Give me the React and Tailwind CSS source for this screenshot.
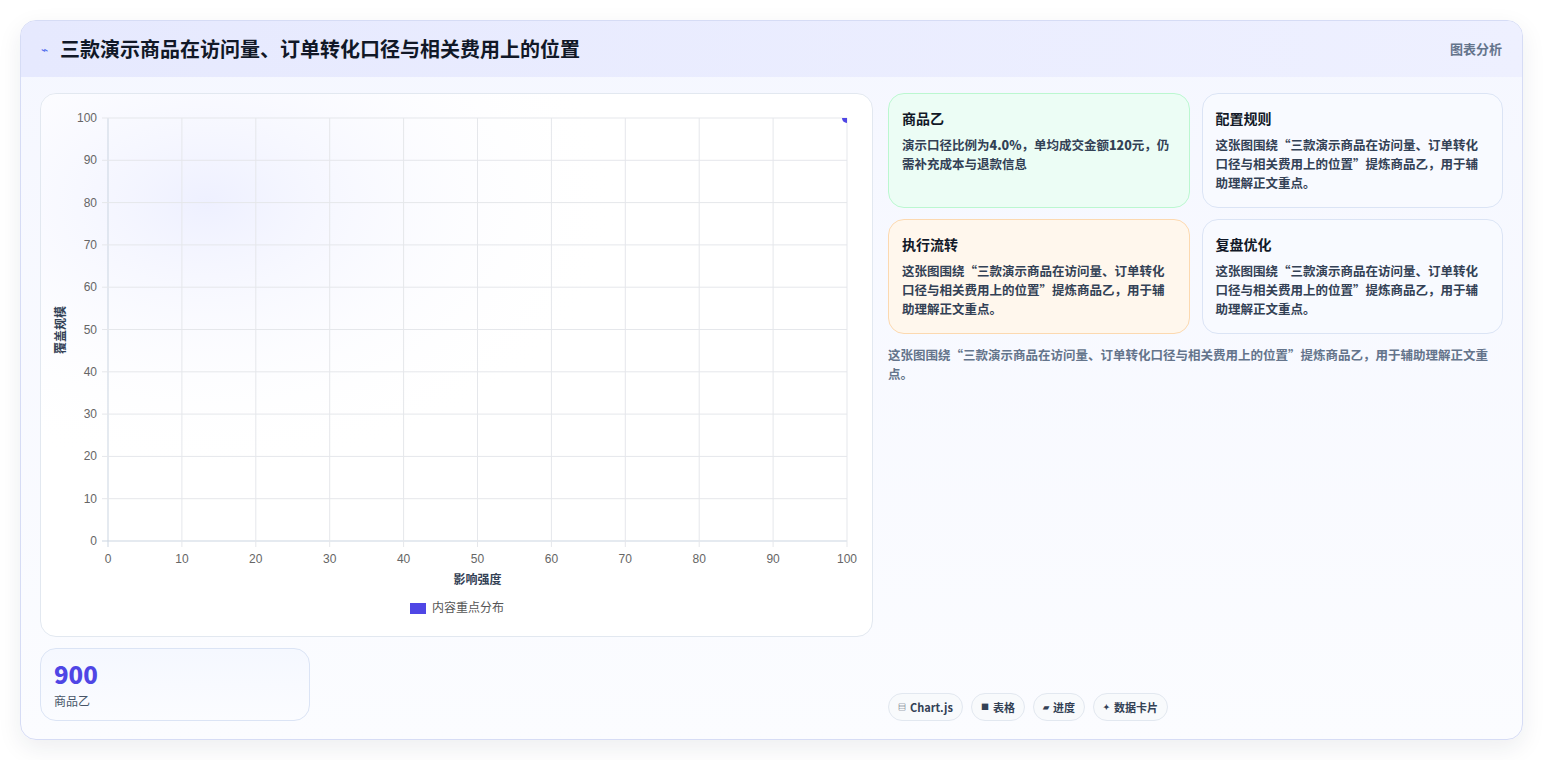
import React from 'react';

const ticks = [0, 10, 20, 30, 40, 50, 60, 70, 80, 90, 100];
const desc = '这张图围绕“三款演示商品在访问量、订单转化口径与相关费用上的位置”提炼商品乙，用于辅助理解正文重点。';

function Chart() {
  // plot area in card coords
  const x0 = 67, x1 = 806, y0 = 24, y1 = 447;
  const sx = (v) => x0 + ((x1 - x0) * v) / 100;
  const sy = (v) => y1 - ((y1 - y0) * v) / 100;
  return (
    <svg width="832" height="543" className="block" style={{ fontFamily: '"Liberation Sans", "Noto Sans CJK SC", sans-serif' }}>
      <defs>
        <radialGradient id="glow" cx="0.2" cy="0.2" r="0.5">
          <stop offset="0" stopColor="#eef0ff" />
          <stop offset="1" stopColor="#ffffff" stopOpacity="0" />
        </radialGradient>
        <clipPath id="plot">
          <rect x={x0} y={y0} width={x1 - x0} height={y1 - y0} />
        </clipPath>
      </defs>
      <rect x="0" y="0" width="832" height="543" fill="url(#glow)" />
      {ticks.map((t) => (
        <g key={t}>
          <line x1={sx(t)} x2={sx(t)} y1={y0} y2={y1 + 6} stroke={t === 0 ? '#cbd5e1' : '#e5e7eb'} />
          <line x1={x0 - 6} x2={x1} y1={sy(t)} y2={sy(t)} stroke={t === 0 ? '#cbd5e1' : '#e5e7eb'} />
          <text x={sx(t)} y={469} fontSize="12" fill="#666" textAnchor="middle">{t}</text>
          <text x={x0 - 11} y={sy(t) + 4} fontSize="12" fill="#666" textAnchor="end">{t}</text>
        </g>
      ))}
      <text x={sx(50)} y={490} fontSize="12" fontWeight="700" fill="#334155" textAnchor="middle">影响强度</text>
      <text transform="translate(24 236) rotate(-90)" fontSize="12" fontWeight="700" fill="#334155" textAnchor="middle">覆盖规模</text>
      <rect x="369" y="509" width="16" height="11" fill="#4f46e5" />
      <text x="391" y="518" fontSize="12" fill="#555">内容重点分布</text>
      <circle cx={sx(100)} cy={sy(100)} r="5" fill="#4f46e5" clipPath="url(#plot)" />
    </svg>
  );
}

const cards = [
  { t: '商品乙', b: <>演示口径比例为<span className="font-extrabold">4.0%</span>，单均成交金额<span className="font-extrabold">120</span>元，仍需补充成本与退款信息</>, c: 'bg-[#ecfdf5] border-[#bbf7d0]' },
  { t: '配置规则', b: desc, c: 'bg-[#f8faff] border-[#dbe4f5]' },
  { t: '执行流转', b: desc, c: 'bg-[#fff7ed] border-[#fcd9b0]' },
  { t: '复盘优化', b: desc, c: 'bg-[#f8faff] border-[#dbe4f5]' },
];

export default function App() {
  return (
    <div className="min-h-screen bg-white p-5" style={{ fontFamily: '"Noto Sans CJK SC", "Liberation Sans", sans-serif' }}>
      <div className="h-[720px] w-[1503px] rounded-2xl border border-[#d6dcf5] bg-gradient-to-b from-[#f5f7ff] to-[#fbfcff] shadow-[0_8px_24px_rgba(30,41,59,0.08)] overflow-hidden flex flex-col">
        <div className="h-[56px] shrink-0 flex items-center justify-between px-5 bg-gradient-to-r from-[#e6e9fe] to-[#eef0ff]">
          <div className="flex items-center gap-3">
            <span className="text-[#4f6bed] text-xs">⌁</span>
            <h1 className="text-[20px] font-bold text-[#111827]">三款演示商品在访问量、订单转化口径与相关费用上的位置</h1>
          </div>
          <span className="text-[13px] font-semibold text-[#64748b]">图表分析</span>
        </div>
        <div className="flex-1 flex gap-[15px] pl-[19px] pr-[19px] pt-4 pb-[18px]">
          <div className="w-[833px] flex flex-col gap-[11px]">
            <div className="h-[544px] rounded-2xl border border-[#e2e8f0] bg-white overflow-hidden">
              <Chart />
            </div>
            <div className="w-[270px] h-[73px] rounded-2xl border border-[#dbe4f5] bg-gradient-to-b from-[#f5f8ff] to-[#fbfcff] px-[13px] pt-[11px]">
              <div className="text-[24px] leading-7 font-extrabold text-[#4f46e5]">900</div>
              <div className="text-xs text-[#475569] mt-[5px]">商品乙</div>
            </div>
          </div>
          <div className="flex-1 flex flex-col">
            <div className="grid grid-cols-2 gap-x-3 gap-y-[11px]">
              {cards.map((c) => (
                <div key={c.t} className={`h-[115px] rounded-2xl border px-[13px] pt-[14px] ${c.c}`}>
                  <div className="text-[14px] font-bold text-[#111827] leading-5">{c.t}</div>
                  <div className="mt-[7px] text-[12.5px] leading-[19px] font-semibold text-[#334155]">{c.b}</div>
                </div>
              ))}
            </div>
            <p className="mt-[11px] text-[12.5px] leading-[19px] font-semibold text-[#64748b]">{desc}</p>
            <div className="mt-auto flex gap-2">
              {[['▤', 'Chart.js'], ['■', '表格'], ['▰', '进度'], ['✦', '数据卡片']].map(([i, l]) => (
                <span key={l} className="h-[28px] flex items-center gap-1 px-[9px] rounded-full border border-[#e2e8f0] bg-[#f8fafc] text-[11px] font-bold text-[#334155]">
                  <span className="text-[8px]">{i}</span>{l}
                </span>
              ))}
            </div>
          </div>
        </div>
      </div>
    </div>
  );
}
